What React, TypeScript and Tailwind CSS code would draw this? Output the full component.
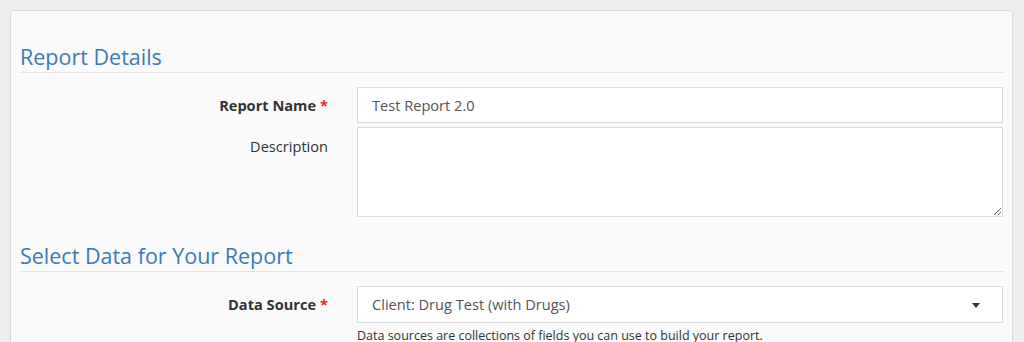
import React from 'react'

// ─── Shared bits ──────────────────────────────────────────────────────────────

const font = { fontFamily: '"Open Sans", "Liberation Sans", sans-serif' }

function SectionHeading({ children, className = '' }: { children: React.ReactNode; className?: string }) {
  return (
    <h3
      className={`border-b border-dotted border-[#cfcfcf] pb-[3px] text-[21.5px] leading-[24px] font-normal text-[#3b7ab6] ${className}`}
    >
      {children}
    </h3>
  )
}

function FieldLabel({ children, required, pt = 'pt-[8px]' }: { children: React.ReactNode; required?: boolean; pt?: string }) {
  return (
    <label className={`block text-right text-[14.6px] leading-[20px] text-[#333] ${required ? 'font-bold' : ''} ${pt}`}>
      {children}
      {required && <span className="ml-[4px] text-[#e4262b]">*</span>}
    </label>
  )
}

// ─── Page ─────────────────────────────────────────────────────────────────────

export default function App() {
  return (
    <div className="min-h-screen bg-[#eeeeee] pt-[10px] pl-[10px] pr-[11px]" style={font}>
      <div className="rounded-[3px] border border-[#dcdcdc] bg-[#fafafa] px-[9px] pt-[34px] pb-[40px]">
        {/* Report details */}
        <SectionHeading>Report Details</SectionHeading>

        <div className="mt-[14px] grid grid-cols-[308px_1fr] gap-x-[29px] gap-y-[4px]">
          <FieldLabel required>Report Name</FieldLabel>
          <input
            defaultValue="Test Report 2.0"
            className="h-[36px] w-full border border-[#dadada] bg-white px-[14px] text-[14.6px] text-[#555] outline-none"
          />

          <FieldLabel pt="pt-[9px]">Description</FieldLabel>
          <textarea className="block h-[90px] w-full border border-[#dadada] bg-white px-[14px] py-[8px] text-[14.6px] text-[#555] outline-none" />
        </div>

        {/* Data selection */}
        <SectionHeading className="mt-[27px]">Select Data for Your Report</SectionHeading>

        <div className="mt-[14px] grid grid-cols-[308px_1fr] gap-x-[29px]">
          <FieldLabel required>Data Source</FieldLabel>
          <div>
            <div className="flex h-[37px] items-center justify-between border border-[#dadada] bg-white pl-[14px] pr-[22px] text-[14.6px] text-[#555]">
              <span>Client: Drug Test (with Drugs)</span>
              <svg width="8" height="5" viewBox="0 0 8 5" className="mt-[1px]">
                <path d="M0 0h8L4 5z" fill="#333" />
              </svg>
            </div>
            <p className="mt-[4px] text-[12.5px] leading-[17px] text-[#333]">
              Data sources are collections of fields you can use to build your report.
            </p>
          </div>
        </div>
      </div>
    </div>
  )
}
